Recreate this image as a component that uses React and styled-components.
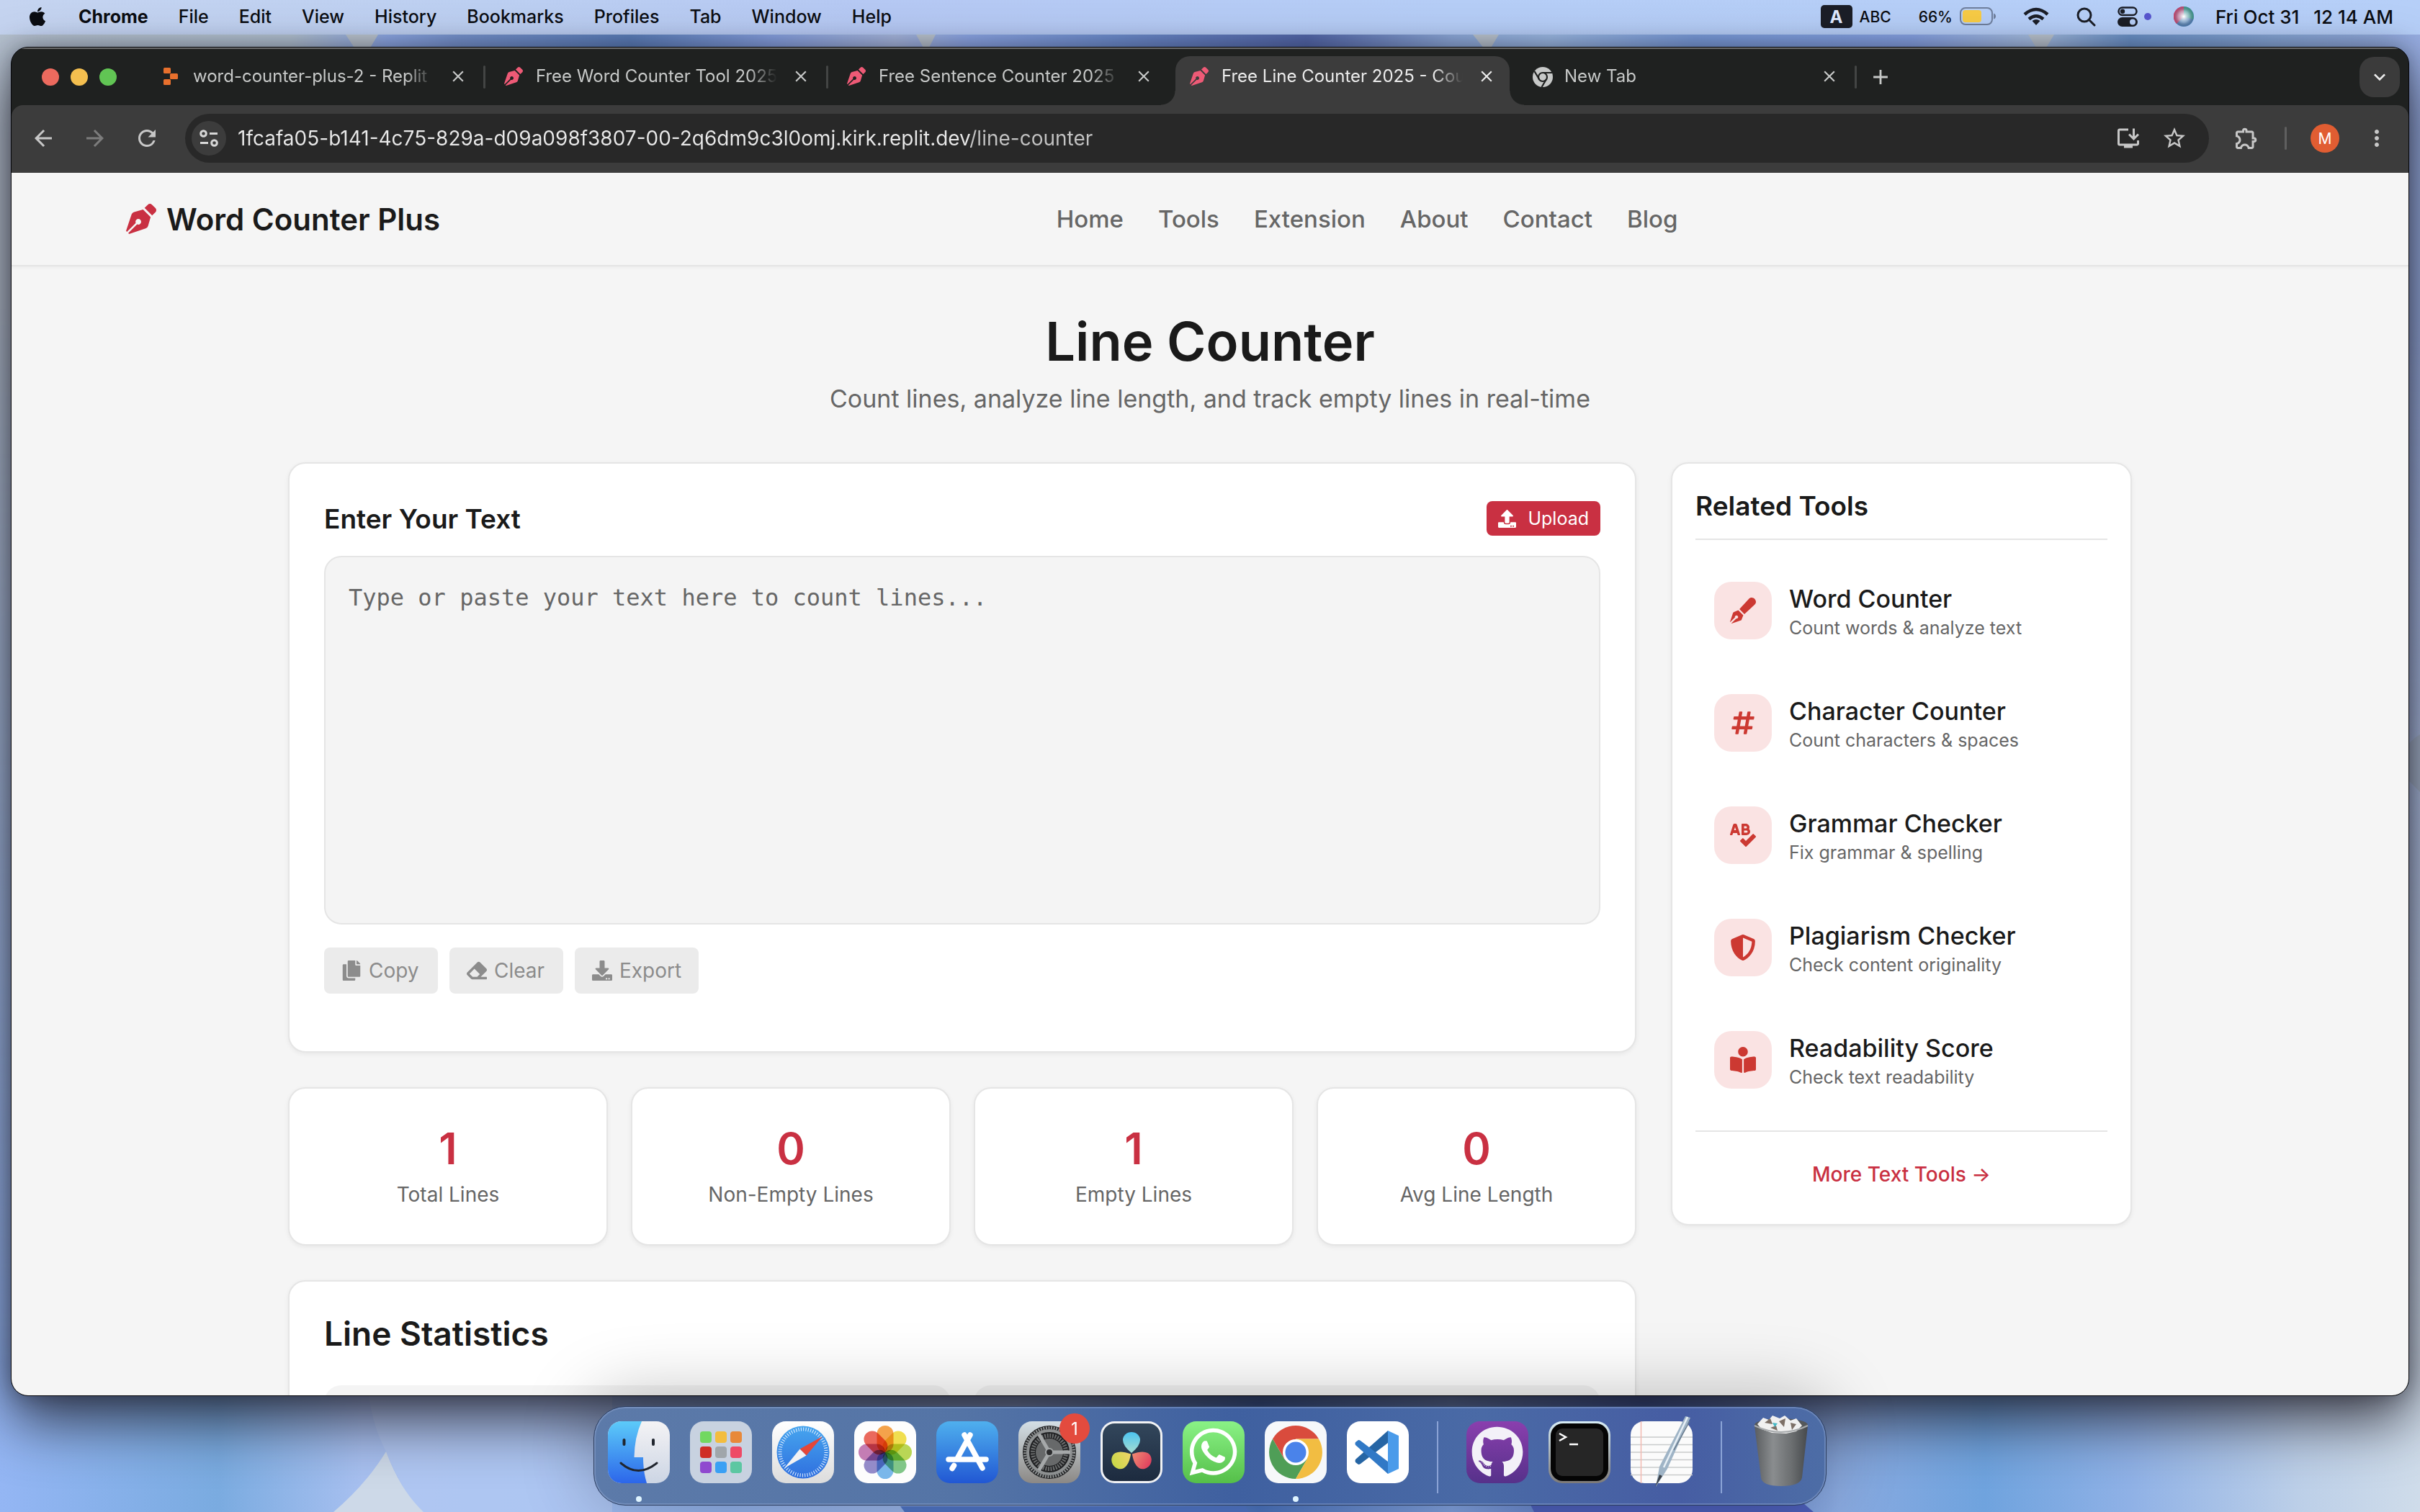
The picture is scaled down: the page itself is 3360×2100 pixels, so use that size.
import React from "react";
import styled, { createGlobalStyle, css } from "styled-components";
import {
  FaApple, FaPenNib, FaPenFancy, FaHashtag, FaSpellCheck, FaShieldAlt, FaBookReader,
  FaCopy, FaEraser, FaDownload, FaUpload, FaWhatsapp, FaGithub,
} from "react-icons/fa";
import {
  MdArrowBack, MdArrowForward, MdRefresh, MdStarBorder, MdOutlineExtension,
  MdOutlineInstallDesktop, MdMoreVert, MdClose, MdAdd, MdKeyboardArrowDown,
} from "react-icons/md";

const ui = `"Inter", "Liberation Sans", sans-serif`;
const red = "#c93042";
const ink = "#1a1a1a";
const muted = "#666666";
const line = "#e5e5e5";
const paper = "#f5f5f5";

const GlobalStyle = createGlobalStyle`
  *, *::before, *::after { box-sizing: border-box; }
  body { margin: 0; font-family: ${ui}; }
  button, input, textarea { font: inherit; }
  button { border: 0; padding: 0; background: none; color: inherit; }
  h1, h2, h3, p, ul { margin: 0; padding: 0; }
  ul { list-style: none; }
  a { color: inherit; text-decoration: none; }
`;

/* ---------- desktop ---------- */

const Desktop = styled.div`
  position: relative;
  height: 100vh;
  display: flex;
  flex-direction: column;
  overflow: hidden;
  background: #86aee6;
`;

const WallpaperSvg = styled.svg`
  position: absolute;
  inset: 0;
  width: 100%;
  height: 100%;
`;

const MenuBar = styled.header`
  position: relative;
  display: flex;
  align-items: center;
  justify-content: space-between;
  height: 48px;
  padding: 0 37px 2px 37px;
  background: linear-gradient(90deg, #c5d4f0 0%, #bccff1 20%, #b5c8f3 36%, #b5cdf6 60%, #b6cff8 100%);
  color: #0b0d12;
  font-size: 25px;
  font-weight: 500;
`;

const MenuGroup = styled.nav`
  display: flex;
  align-items: center;
  gap: 42px;
  svg { font-size: 30px; }
`;

const MenuItem = styled.button`
  font-weight: ${(p) => (p.$bold ? 700 : 500)};
`;

const StatusGroup = styled.div`
  display: flex;
  align-items: center;
  gap: ${(p) => (p.$tight ? 30 : 38)}px;
`;

const StatusPair = styled.span`
  display: flex;
  align-items: center;
  gap: 10px;
  font-size: 21px;
`;

const InputBadge = styled.span`
  display: grid;
  place-items: center;
  width: 44px;
  height: 32px;
  border-radius: 5px;
  background: #1b1e27;
  color: #dfe9ff;
  font-size: 24px;
  font-weight: 700;
`;

const Clock = styled.span`
  display: flex;
  gap: 20px;
  font-size: 26px;
`;

/* ---------- browser window ---------- */

const Window = styled.section`
  position: relative;
  flex: 1;
  min-height: 0;
  display: flex;
  flex-direction: column;
  margin: 17px 15px 161px;
  border: 1px solid #05060a;
  border-radius: 24px;
  overflow: hidden;
  background: #1f2120;
  box-shadow: 0 34px 80px rgba(20, 16, 24, 0.75), 0 0 30px rgba(20, 24, 40, 0.35);
`;

const TabStrip = styled.div`
  display: flex;
  align-items: center;
  height: 80px;
  padding: 0 12px 0 42px;
  border-top: 2px solid #6b6b6b;
`;

const Lights = styled.div`
  display: flex;
  gap: 16px;
  margin-right: 36px;
`;

const Light = styled.button`
  width: 24px;
  height: 24px;
  border-radius: 50%;
  background: ${(p) => p.$color};
`;

const Tab = styled.div`
  position: relative;
  flex: 0 1 476px;
  min-width: 0;
  display: flex;
  align-items: center;
  height: 78px;
  padding: 0 28px 3px 26px;
  color: ${(p) => (p.$active ? "#ececec" : "#c7c9c8")};
  font-size: 24px;
  isolation: isolate;

  ${(p) =>
    p.$active &&
    css`
      &::before {
        content: "";
        position: absolute;
        z-index: -1;
        inset: 10px 6px 0;
        border-radius: 20px 20px 0 0;
        background: #3c3c3c;
      }
      &::after {
        content: "";
        position: absolute;
        z-index: -1;
        left: -14px;
        right: -14px;
        bottom: 0;
        height: 20px;
        background:
          radial-gradient(circle at 0 0, transparent 19px, #3c3c3c 20px) left / 20px 20px no-repeat,
          radial-gradient(circle at 100% 0, transparent 19px, #3c3c3c 20px) right / 20px 20px no-repeat;
      }
    `}
`;

const TabIcon = styled.span`
  display: grid;
  place-items: center;
  width: 26px;
  height: 26px;
  margin-right: 18px;
  color: #ee5a76;
  font-size: 26px;
`;

const TabTitle = styled.span`
  flex: 1;
  min-width: 0;
  overflow: hidden;
  white-space: nowrap;
  mask-image: linear-gradient(90deg, #000 88%, transparent 100%);
`;

const TabClose = styled.button`
  display: grid;
  place-items: center;
  width: 26px;
  height: 26px;
  margin: 0 -3px 0 20px;
  font-size: 26px;
`;

const StripRule = styled.span`
  width: 3px;
  height: 32px;
  margin-left: -3px;
  border-radius: 2px;
  background: ${(p) => (p.$hidden ? "transparent" : "#434544")};
`;

const NewTab = styled.button`
  display: grid;
  place-items: center;
  width: 66px;
  height: 56px;
  color: #c7c9c8;
  font-size: 34px;
`;

const TabSearch = styled.button`
  display: grid;
  place-items: center;
  width: 56px;
  height: 56px;
  margin-left: auto;
  border-radius: 20px;
  background: #3b3b3b;
  color: #ececec;
  font-size: 32px;
`;

const Toolbar = styled.div`
  display: flex;
  align-items: center;
  height: 94px;
  padding: 12px 8px 14px;
  border-radius: 16px 16px 0 0;
  background: #3c3c3c;
  color: #c7c7c7;
`;

const ToolButton = styled.button`
  display: grid;
  place-items: center;
  width: ${(p) => p.$width || 72}px;
  height: 48px;
  color: ${(p) => (p.$dim ? "#7c7c7c" : "inherit")};
  font-size: 36px;
`;

const Omnibox = styled.form`
  flex: 1;
  display: flex;
  align-items: center;
  height: 68px;
  margin: 0 16px 0 17px;
  padding: 0 16px 0 9px;
  border-radius: 34px;
  background: #282828;
`;

const SiteInfo = styled.button`
  display: grid;
  place-items: center;
  width: 48px;
  height: 48px;
  margin-right: 16px;
  border-radius: 50%;
  background: #3c3c3c;
`;

const Address = styled.input`
  flex: 1;
  min-width: 0;
  height: 48px;
  padding: 0;
  border: 0;
  outline: 0;
  font-size: 28px;
  background: linear-gradient(90deg, #e9e9e9 1018px, #c3c3c3 1018px);
  background-clip: text;
  color: transparent;
`;

const ToolRule = styled.span`
  width: 3px;
  height: 32px;
  margin: 0 33px 0 17px;
  border-radius: 2px;
  background: #5f5f5f;
`;

const Avatar = styled.button`
  width: 40px;
  height: 40px;
  margin-right: 16px;
  border-radius: 50%;
  background: #e15d32;
  color: #ffffff;
  font-size: 21px;
`;

/* ---------- web page ---------- */

const Page = styled.div`
  flex: 1;
  min-height: 0;
  overflow: hidden;
  background: ${paper};
  color: ${ink};
`;

const SiteHeader = styled.header`
  display: flex;
  align-items: center;
  justify-content: space-between;
  height: 130px;
  padding: 0 159px;
  border-bottom: 2px solid ${line};
  box-shadow: 0 2px 4px rgba(0, 0, 0, 0.04);
  &::after { content: ""; }
`;

const Brand = styled.a`
  display: flex;
  align-items: center;
  gap: 14px;
  font-size: 42px;
  font-weight: 600;
  svg { color: ${red}; }
`;

const SiteNav = styled.nav`
  display: flex;
  gap: 48px;
  color: ${muted};
  font-size: 33px;
  font-weight: 500;
`;

const Intro = styled.div`
  padding: 60px 0;
  text-align: center;
`;

const Title = styled.h1`
  margin-bottom: 8px;
  font-size: 74px;
  font-weight: 600;
  line-height: 88px;
`;

const Subtitle = styled.p`
  color: ${muted};
  font-size: 34px;
  line-height: 56px;
`;

const Columns = styled.main`
  display: grid;
  grid-template-columns: minmax(0, 1fr) 640px;
  align-items: start;
  gap: 48px;
  max-width: 2560px;
  margin: 0 auto;
`;

const MainColumn = styled.div`
  display: grid;
  gap: 48px;
`;

const Card = styled.section`
  padding: ${(p) => p.$pad || "48px"};
  border: 2px solid ${line};
  border-radius: 24px;
  background: #ffffff;
  box-shadow: 0 2px 6px rgba(0, 0, 0, 0.06);
`;

const CardHead = styled.div`
  display: flex;
  align-items: center;
  justify-content: space-between;
  height: 56px;
  margin-bottom: 24px;
`;

const Label = styled.label`
  font-size: 37px;
  font-weight: 600;
`;

const UploadButton = styled.button`
  display: flex;
  align-items: center;
  gap: 16px;
  height: 48px;
  padding: 0 16px;
  border-radius: 8px;
  background: ${red};
  color: #ffffff;
  font-size: 25px;
`;

const TextBox = styled.textarea`
  display: block;
  width: 100%;
  height: 512px;
  padding: 32px;
  border: 2px solid ${line};
  border-radius: 24px;
  outline: 0;
  resize: none;
  background: #f4f4f4;
  color: ${ink};
  font-family: "DejaVu Sans Mono", monospace;
  font-size: 32px;
  line-height: 48px;
  &::placeholder { color: ${muted}; opacity: 1; }
`;

const Actions = styled.div`
  display: flex;
  gap: 16px;
  margin: 32px 0;
`;

const ActionButton = styled.button`
  display: flex;
  align-items: center;
  gap: 10px;
  height: 64px;
  min-width: 158px;
  padding: 0 24px;
  border-radius: 8px;
  background: #ebebeb;
  color: #8c8c8c;
  font-size: 28px;
`;

const Stats = styled.div`
  display: grid;
  grid-template-columns: repeat(4, 1fr);
  gap: 32px;
`;

const StatValue = styled.p`
  margin-bottom: 8px;
  color: ${red};
  font-size: 60px;
  font-weight: 600;
  line-height: 70px;
  text-align: center;
`;

const StatLabel = styled.p`
  color: ${muted};
  font-size: 28px;
  line-height: 42px;
  text-align: center;
`;

const SectionTitle = styled.h2`
  margin-bottom: 48px;
  font-size: 46px;
  font-weight: 600;
  line-height: 48px;
`;

const Panels = styled.div`
  display: grid;
  grid-template-columns: 1fr 1fr;
  gap: 32px;
`;

const Panel = styled.div`
  height: 180px;
  border-radius: 24px;
  background: #f4f4f4;
`;

const SideTitle = styled.h3`
  padding-bottom: 18px;
  border-bottom: 2px solid ${line};
  font-size: 37px;
  font-weight: 600;
  line-height: 54px;
`;

const ToolList = styled.ul`
  padding: 20px 0;
  border-bottom: 2px solid ${line};
`;

const ToolLink = styled.a`
  display: flex;
  align-items: center;
  gap: 24px;
  height: 156px;
  padding: 0 26px;
`;

const ToolIcon = styled.span`
  display: grid;
  place-items: center;
  width: 80px;
  height: 80px;
  border-radius: 24px;
  background: #fae3e3;
  color: #cc3932;
  font-size: 36px;
`;

const ToolText = styled.span`
  padding-top: 4px;
`;

const ToolName = styled.span`
  display: block;
  font-size: 34px;
  font-weight: 500;
  line-height: 44px;
`;

const ToolNote = styled.span`
  display: block;
  color: ${muted};
  font-size: 25px;
  line-height: 36px;
`;

const MoreLink = styled.a`
  display: block;
  padding: 38px 0 16px;
  color: ${red};
  font-size: 28px;
  font-weight: 500;
  line-height: 42px;
  text-align: center;
`;

/* ---------- dock ---------- */

const DockBar = styled.footer`
  position: absolute;
  bottom: 9px;
  left: 50%;
  translate: -50% 0;
  display: flex;
  align-items: flex-start;
  gap: 28px;
  height: 138px;
  padding: 20px 19px;
  border: 1px solid #2c3d5e;
  border-radius: 44px;
  background: linear-gradient(90deg, #5c7aa9 0%, #5474a6 30%, #3f60a0 52%, #4a6aa6 72%, #465da3 88%, #4d6da6 100%);
  box-shadow: inset 0 0 0 2px rgba(160, 180, 220, 0.35), 0 -10px 100px rgba(0, 0, 0, 0.28);
`;

const DockItem = styled.button`
  position: relative;
  width: 86px;
  height: 86px;
  svg { display: block; overflow: visible; }
`;

const DockRule = styled.span`
  width: 2px;
  height: 100px;
  margin: 0 11px;
  background: #8ba3d6;
`;

const Running = styled.span`
  position: absolute;
  left: 39px;
  bottom: -26px;
  width: 8px;
  height: 8px;
  border-radius: 50%;
  background: #dff4ff;
`;

const Badge = styled.span`
  position: absolute;
  top: -11px;
  right: -13px;
  display: grid;
  place-items: center;
  width: 42px;
  height: 42px;
  border-radius: 50%;
  background: #e34b3e;
  color: #ffffff;
  font-size: 24px;
`;

/* ---------- drawings ---------- */

const topStops = [
  [0, "#b6c2d0"], [12, "#b4c3d2"], [16, "#8ea9e6"], [19, "#7794cf"], [26, "#5c7fbb"], [32, "#88a2e2"],
  [37, "#a9b9e0"], [40, "#8ea8e8"], [46, "#6f8fd0"], [54, "#5468ab"], [60, "#8fabdc"], [64, "#9dbbe6"],
  [70, "#7b9ddc"], [79, "#88a4e6"], [84, "#a8c0e4"], [88, "#6c93c9"], [94, "#88a8d8"], [100, "#98aee2"],
];
const bottomStops = [
  [0, "#94b6f4"], [9, "#7aabe0"], [15, "#a8c0f0"], [22, "#a3c0f2"], [30, "#90b0e8"], [42, "#9db6e8"],
  [52, "#4a72bc"], [60, "#7f9fdc"], [68, "#4a66b4"], [76, "#8aaae0"], [82, "#6fa3de"], [88, "#8fb1e6"],
  [95, "#bccfe8"], [100, "#cfdcea"],
];

function Wallpaper() {
  return (
    <WallpaperSvg viewBox="0 0 3360 2100" preserveAspectRatio="none" aria-hidden="true">
      <defs>
        <linearGradient id="wpTop">{topStops.map(([o, c]) => <stop key={o} offset={`${o}%`} stopColor={c} />)}</linearGradient>
        <linearGradient id="wpBottom">{bottomStops.map(([o, c]) => <stop key={o} offset={`${o}%`} stopColor={c} />)}</linearGradient>
        <linearGradient id="wpFade" x2="0" y2="1">
          <stop offset="0.2" stopColor="#fff" stopOpacity="0" />
          <stop offset="0.9" stopColor="#fff" />
        </linearGradient>
        <mask id="wpMask"><rect width="3360" height="2100" fill="url(#wpFade)" /></mask>
      </defs>
      <rect width="3360" height="2100" fill="url(#wpTop)" />
      <rect width="3360" height="2100" fill="url(#wpBottom)" mask="url(#wpMask)" />
      <g fill="#bcc6d0">
        <path d="M480 48h45l-12 20h-20z" />
        <path d="M1272 48h27l-10 20h-6z" />
        <path d="M2045 48h36l-12 20h-8z" />
        <path d="M2816 48h36l-12 20h-12z" />
      </g>
      <path d="M3360 1020q-34 20-20 60l20 20z" fill="#a9b9cf" />
      <path d="M512 1938q6 44 24 78 26 62 50 84H850V1938z" fill="#b6cbf3" opacity="0.55" />
      <path d="M536 2016q-28 46-73 84h125q-32-30-52-84z" fill="#cdd9e8" />
      <path d="M1250 2092h480l4 8h-478z" fill="#4f74c4" />
      <path d="M2124 2088h380l14 12h-388z" fill="#4c5eb8" />
    </WallpaperSvg>
  );
}

const Battery = () => (
  <svg width="50" height="26" viewBox="0 0 50 26" aria-hidden="true">
    <rect x="1" y="1" width="44" height="23" rx="7" fill="none" stroke="#6f7f9d" strokeWidth="2" />
    <rect x="4" y="4" width="26" height="17" rx="4" fill="#f7cb45" />
    <path d="M47 8.500q3 1 3 4t-3 4z" fill="#6f7f9d" />
  </svg>
);

const Wifi = () => (
  <svg width="36" height="26" viewBox="0 0 36 26" fill="none" stroke="#1b1e27" strokeWidth="4.500" aria-hidden="true">
    <path d="M2 10Q18 -4 34 10" />
    <path d="M8 16.500Q18 8 28 16.500" />
    <path d="M18 25l-5.500-6q5.500-4 11 0z" fill="#1b1e27" stroke="none" />
  </svg>
);

const Lens = () => (
  <svg width="27" height="27" viewBox="0 0 27 27" fill="none" stroke="#1b1e27" strokeWidth="3" strokeLinecap="round" aria-hidden="true">
    <circle cx="11" cy="11" r="9" />
    <path d="M17.500 17.500l7.500 7.500" />
  </svg>
);

const ControlCenter = () => (
  <svg width="48" height="28" viewBox="0 0 48 28" aria-hidden="true">
    <rect x="1.500" y="1.500" width="25" height="10.500" rx="5.200" fill="none" stroke="#1b1e27" strokeWidth="2.500" />
    <circle cx="7" cy="6.800" r="3.200" fill="#1b1e27" />
    <rect x="0" y="15" width="28" height="13" rx="6.500" fill="#1b1e27" />
    <circle cx="21" cy="21.500" r="4" fill="#b5cdf6" />
    <circle cx="42" cy="14" r="5" fill="#5856cf" />
  </svg>
);

const Siri = () => (
  <svg width="28" height="28" viewBox="0 0 28 28" aria-hidden="true">
    <defs>
      <radialGradient id="siriGlow">
        <stop offset="0.05" stopColor="#fff" />
        <stop offset="0.6" stopColor="#cfe0f4" stopOpacity="0.5" />
        <stop offset="1" stopColor="#55607c" stopOpacity="0.2" />
      </radialGradient>
    </defs>
    <circle cx="14" cy="14" r="14" fill="#4d7cae" />
    <path d="M14 0A14 14 0 0 0 4 24L14 14z" fill="#c8466c" />
    <path d="M14 0A14 14 0 0 1 27 18L14 14z" fill="#3f9c87" />
    <circle cx="14" cy="14" r="13" fill="url(#siriGlow)" />
  </svg>
);

const ReplitMark = () => (
  <svg width="20" height="24" viewBox="0 0 20 24" fill="#e8702d" aria-hidden="true">
    <rect width="10" height="8" rx="1.500" />
    <rect x="9" y="8" width="11" height="8" rx="1.500" />
    <rect y="16" width="10" height="8" rx="1.500" />
  </svg>
);

const ChromeMark = () => (
  <svg width="28" height="28" viewBox="0 0 28 28" aria-hidden="true">
    <circle cx="14" cy="14" r="14" fill="#c7c9c8" />
    <g stroke="#1f2120" strokeWidth="2.200">
      <circle cx="14" cy="14" r="6" fill="#c7c9c8" />
      <path d="M14 8h13M9 17L2.500 6M19 17l-6.500 11" />
    </g>
  </svg>
);

const Sliders = () => (
  <svg width="26" height="24" viewBox="0 0 26 24" fill="none" stroke="#d8d8d8" strokeWidth="3" aria-hidden="true">
    <circle cx="5.500" cy="5.500" r="3.800" />
    <path d="M14 5.500h11M1 18.500h11" />
    <circle cx="20.500" cy="18.500" r="3.800" />
  </svg>
);

const Art = ({ children }) => (
  <svg width="86" height="86" viewBox="0 0 86 86" aria-hidden="true">{children}</svg>
);

const Grad = ({ id, from, to }) => (
  <linearGradient id={id} x2="0" y2="1">
    <stop stopColor={from} />
    <stop offset="1" stopColor={to} />
  </linearGradient>
);

const Finder = () => (
  <Art>
    <defs>
      <Grad id="fBlue" from="#5ccbf9" to="#2c66ea" />
      <Grad id="fPale" from="#f4f3f5" to="#ccd5e4" />
      <clipPath id="fClip"><rect width="86" height="86" rx="19" /></clipPath>
    </defs>
    <g clipPath="url(#fClip)">
      <rect width="86" height="86" fill="url(#fPale)" />
      <path d="M0 0H47Q37 22 36.500 50H49Q49 70 54 86H0z" fill="url(#fBlue)" />
    </g>
    <g fill="none" stroke="#20252e" strokeLinecap="round">
      <path d="M22.500 26v6M63 26v6" strokeWidth="4" />
      <path d="M18 58Q42 79 68 58" strokeWidth="3" />
    </g>
  </Art>
);

const padColors = ["#72d860", "#f3bd3e", "#e8893a", "#cf2e26", "#a0a6aa", "#ee4a66", "#8f49cf", "#3aa0f4", "#5cc7a2"];
const Launchpad = () => (
  <Art>
    <rect width="86" height="86" rx="19" fill="#c8d2e0" />
    {padColors.map((c, i) => (
      <rect key={c} x={14 + (i % 3) * 21} y={14 + Math.floor(i / 3) * 21} width="16" height="16" rx="4" fill={c} />
    ))}
  </Art>
);

const Safari = () => (
  <Art>
    <defs>
      <Grad id="sfBg" from="#ffffff" to="#dcdcdc" />
      <Grad id="sfDial" from="#46a5ee" to="#2f6fdf" />
    </defs>
    <rect width="86" height="86" rx="19" fill="url(#sfBg)" />
    <circle cx="43" cy="43" r="36.500" fill="url(#sfDial)" />
    <circle cx="43" cy="43" r="32" fill="none" stroke="#e6f2ff" strokeWidth="5" strokeDasharray="1 2.350" />
    <path d="M70 21L38.500 38.500 47.500 47.500z" fill="#e44638" />
    <path d="M17 65L38.500 38.500 47.500 47.500z" fill="#f2f2f4" />
  </Art>
);

const petals = ["#f59a37", "#f1dd3c", "#b4d442", "#74c27c", "#6cb1ea", "#8a80c6", "#c070ae", "#ea5a4c"];
const Petal = styled.rect`
  mix-blend-mode: multiply;
`;
const Photos = () => (
  <Art>
    <rect width="86" height="86" rx="19" fill="#fdfdfd" />
    {petals.map((c, i) => (
      <Petal key={c} x="31.500" y="6" width="23" height="37" rx="11.500" fill={c} opacity="0.9"
        transform={`rotate(${i * 45} 43 43)`} />
    ))}
  </Art>
);

const AppStore = () => (
  <Art>
    <defs><Grad id="asBg" from="#4fb0ee" to="#2157d3" /></defs>
    <rect width="86" height="86" rx="19" fill="url(#asBg)" />
    <g stroke="#fff" strokeWidth="7.500" strokeLinecap="round">
      <path d="M47 19L30 50M24.500 61.500L22 65.500M39 19L64 65M17 53H69" />
    </g>
  </Art>
);

const Settings = () => (
  <Art>
    <defs><Grad id="stBg" from="#d4dfe6" to="#8b8885" /></defs>
    <rect width="86" height="86" rx="19" fill="url(#stBg)" />
    <circle cx="43" cy="43" r="37" fill="#1f2022" />
    <circle cx="43" cy="43" r="34" fill="none" stroke="#8d9091" strokeWidth="4" strokeDasharray="2 1.600" />
    <circle cx="43" cy="43" r="30" fill="none" stroke="#8d9091" strokeWidth="4" />
    <circle cx="43" cy="43" r="23" fill="none" stroke="#6a6c6d" strokeWidth="6" strokeDasharray="2 1.600" />
    <circle cx="43" cy="43" r="19" fill="#67696a" />
    <path d="M43 43H72M43 43L28.500 18M43 43L28.500 68" stroke="#a5a8a9" strokeWidth="5" />
    <circle cx="43" cy="43" r="5" fill="#2b2c2e" stroke="#a5a8a9" strokeWidth="2" />
  </Art>
);

const Resolve = () => (
  <Art>
    <defs>
      <Grad id="rvBg" from="#33475c" to="#1c2a3e" />
      <Grad id="rvA" from="#4cc4f0" to="#a6dcd0" />
      <Grad id="rvB" from="#c8d848" to="#f0d468" />
      <Grad id="rvC" from="#e0405e" to="#ef8a72" />
    </defs>
    <rect x="1.500" y="1.500" width="83" height="83" rx="18" fill="url(#rvBg)" stroke="#f1f2f4" strokeWidth="3" />
    <path d="M43 44Q31 34 31 26a12 11 0 0 1 24 0Q55 34 43 44z" fill="url(#rvA)" />
    <path d="M43 44Q31 34 31 26a12 11 0 0 1 24 0Q55 34 43 44z" fill="url(#rvC)" transform="rotate(120 43 45)" />
    <path d="M43 44Q31 34 31 26a12 11 0 0 1 24 0Q55 34 43 44z" fill="url(#rvB)" transform="rotate(240 43 45)" />
  </Art>
);

const WhatsApp = () => (
  <Art>
    <defs><Grad id="waBg" from="#8af286" to="#55bf49" /></defs>
    <rect width="86" height="86" rx="19" fill="url(#waBg)" />
    <FaWhatsapp x="5" y="5" size={75} color="#fff" />
  </Art>
);

const Chrome = () => (
  <Art>
    <rect width="86" height="86" rx="19" fill="#f6f8fa" />
    <path d="M11 24.500A37 37 0 0 1 75 24.500H43L27 52.250z" fill="#d94b3d" />
    <path d="M11 24.500A37 37 0 0 0 43 80L59 52.250H27z" fill="#4f9e57" />
    <path d="M43 80A37 37 0 0 0 75 24.500H43L59 52.250z" fill="#f2bd42" />
    <circle cx="43" cy="43" r="18" fill="#fff" />
    <circle cx="43" cy="43" r="14.500" fill="#4a83ea" />
  </Art>
);

const VsCode = () => (
  <Art>
    <rect width="86" height="86" rx="19" fill="#fff" />
    <path d="M57 13L12 53q-1 2 0 4l4 3q2 0 3-1L57 30z" fill="#2665a4" />
    <path d="M57 73L12 33q-1-2 0-4l4-3q2 0 3 1L57 56z" fill="#3179c6" />
    <path d="M57 13L72 20V66L57 73z" fill="#4a9bea" />
  </Art>
);

const GitHub = () => (
  <Art>
    <defs><Grad id="ghBg" from="#8a3fae" to="#56318a" /></defs>
    <rect width="86" height="86" rx="19" fill="url(#ghBg)" />
    <FaGithub x="6.500" y="6.500" size={73} color="#f3f1f8" />
  </Art>
);

const Terminal = () => (
  <Art>
    <defs><Grad id="tmRim" from="#d7ecf5" to="#7d7a78" /></defs>
    <rect width="86" height="86" rx="19" fill="url(#tmRim)" />
    <rect x="3" y="3" width="80" height="80" rx="17" fill="#050505" />
    <rect x="10" y="10" width="66" height="66" rx="9" fill="#262626" />
    <path d="M15 17l9 5-9 5M29 32H41" fill="none" stroke="#fff" strokeWidth="2.500" />
  </Art>
);

const TextEdit = () => (
  <Art>
    <rect width="86" height="86" rx="19" fill="#fbfbfb" />
    <path d="M0 22H86M0 32.500H86M0 43H86M0 53.500H86M0 64H86M0 74.500H86" stroke="#c9cbcc" strokeWidth="1.500" />
    <path d="M14.500 0V86" stroke="#f3b9b0" strokeWidth="1.500" />
    <path d="M76-7l7 2L51 66l-16 25 5-28z" fill="#9fb4c6" />
    <path d="M79-6L46 64" stroke="#e8f0f6" strokeWidth="2.500" />
    <path d="M82 0L60 40" stroke="#66788a" strokeWidth="1.500" />
    <path d="M40 74l-6 17 10-15z" fill="#3b4149" />
  </Art>
);

const Trash = () => (
  <Art>
    <defs>
      <linearGradient id="trBody">
        <stop stopColor="#5a5d60" />
        <stop offset="0.35" stopColor="#8a8d8f" />
        <stop offset="0.7" stopColor="#6b6e70" />
        <stop offset="1" stopColor="#46494c" />
      </linearGradient>
    </defs>
    <path d="M6 6Q43 22 80 6L72 78Q70 90 43 90T15 78z" fill="url(#trBody)" />
    <ellipse cx="43" cy="5" rx="37" ry="9" fill="#55585b" />
    <path d="M10 4l8-9 8 3 5-6 10 4 7-4 8 7 8-3 8 10-8 8-14 3-20-1-14-5z" fill="#f0f0f0" />
    <path d="M20 2l8-6 3 8zM40 0l9-4-2 12zM56 2l8 2-6 8zM28 9l8-3 2 7z" fill="#7c6f66" />
    <path d="M31 2l7 1-4 5z" fill="#45b7c4" />
    <path d="M6 6Q43 24 80 6" fill="none" stroke="#a8abad" strokeWidth="2" />
  </Art>
);

/* ---------- data ---------- */

const menus = ["Chrome", "File", "Edit", "View", "History", "Bookmarks", "Profiles", "Tab", "Window", "Help"];

const tabs = [
  { title: "word-counter-plus-2 - Replit", icon: <ReplitMark />, rule: true },
  { title: "Free Word Counter Tool 2025", icon: <FaPenNib />, rule: true },
  { title: "Free Sentence Counter 2025 -", icon: <FaPenNib /> },
  { title: "Free Line Counter 2025 - Count", icon: <FaPenNib />, active: true },
  { title: "New Tab", icon: <ChromeMark />, rule: true },
];

const navLinks = ["Home", "Tools", "Extension", "About", "Contact", "Blog"];

const stats = [["1", "Total Lines"], ["0", "Non-Empty Lines"], ["1", "Empty Lines"], ["0", "Avg Line Length"]];

const related = [
  { name: "Word Counter", note: "Count words & analyze text", Icon: FaPenFancy },
  { name: "Character Counter", note: "Count characters & spaces", Icon: FaHashtag },
  { name: "Grammar Checker", note: "Fix grammar & spelling", Icon: FaSpellCheck },
  { name: "Plagiarism Checker", note: "Check content originality", Icon: FaShieldAlt },
  { name: "Readability Score", note: "Check text readability", Icon: FaBookReader },
];

const dockApps = [
  { name: "Finder", Icon: Finder, running: true },
  { name: "Launchpad", Icon: Launchpad },
  { name: "Safari", Icon: Safari },
  { name: "Photos", Icon: Photos },
  { name: "App Store", Icon: AppStore },
  { name: "System Settings", Icon: Settings, badge: "1" },
  { name: "DaVinci Resolve", Icon: Resolve },
  { name: "WhatsApp", Icon: WhatsApp },
  { name: "Google Chrome", Icon: Chrome, running: true },
  { name: "Visual Studio Code", Icon: VsCode },
  null,
  { name: "GitHub Desktop", Icon: GitHub },
  { name: "Terminal", Icon: Terminal },
  { name: "TextEdit", Icon: TextEdit },
  null,
  { name: "Trash", Icon: Trash },
];

/* ---------- sections ---------- */

function SystemBar() {
  return (
    <MenuBar>
      <MenuGroup aria-label="Menu bar">
        <FaApple aria-hidden="true" />
        {menus.map((m, i) => <MenuItem key={m} $bold={i === 0}>{m}</MenuItem>)}
      </MenuGroup>
      <StatusGroup>
        <StatusPair><InputBadge>A</InputBadge>ABC</StatusPair>
        <StatusPair>66%<Battery /></StatusPair>
        <Wifi />
        <StatusGroup $tight>
          <Lens />
          <ControlCenter />
          <Siri />
          <Clock><span>Fri Oct 31</span><span>12 14 AM</span></Clock>
        </StatusGroup>
      </StatusGroup>
    </MenuBar>
  );
}

function BrowserChrome() {
  return (
    <>
      <TabStrip>
        <Lights>
          <Light $color="#ec6a5e" aria-label="Close window" />
          <Light $color="#f4bf4f" aria-label="Minimize window" />
          <Light $color="#61c554" aria-label="Zoom window" />
        </Lights>
        {tabs.map((t) => (
          <React.Fragment key={t.title}>
            <Tab $active={t.active}>
              <TabIcon>{t.icon}</TabIcon>
              <TabTitle>{t.title}</TabTitle>
              <TabClose aria-label="Close tab"><MdClose /></TabClose>
            </Tab>
            <StripRule $hidden={!t.rule} />
          </React.Fragment>
        ))}
        <NewTab aria-label="New tab"><MdAdd /></NewTab>
        <TabSearch aria-label="Search tabs"><MdKeyboardArrowDown /></TabSearch>
      </TabStrip>
      <Toolbar>
        <ToolButton aria-label="Back"><MdArrowBack /></ToolButton>
        <ToolButton aria-label="Forward" $dim><MdArrowForward /></ToolButton>
        <ToolButton aria-label="Reload"><MdRefresh /></ToolButton>
        <Omnibox>
          <SiteInfo type="button" aria-label="Site information"><Sliders /></SiteInfo>
          <Address
            type="text"
            aria-label="Address"
            defaultValue="1fcafa05-b141-4c75-829a-d09a098f3807-00-2q6dm9c3l0omj.kirk.replit.dev/line-counter"
          />
          <ToolButton type="button" $width={64} aria-label="Install app"><MdOutlineInstallDesktop /></ToolButton>
          <ToolButton type="button" $width={64} aria-label="Bookmark"><MdStarBorder /></ToolButton>
        </Omnibox>
        <ToolButton aria-label="Extensions"><MdOutlineExtension /></ToolButton>
        <ToolRule />
        <Avatar aria-label="Profile">M</Avatar>
        <ToolButton aria-label="More"><MdMoreVert /></ToolButton>
      </Toolbar>
    </>
  );
}

function Site() {
  return (
    <Page>
      <SiteHeader>
        <Brand href="#"><FaPenNib />Word Counter Plus</Brand>
        <SiteNav>{navLinks.map((n) => <a key={n} href="#">{n}</a>)}</SiteNav>
      </SiteHeader>
      <Intro>
        <Title>Line Counter</Title>
        <Subtitle>Count lines, analyze line length, and track empty lines in real-time</Subtitle>
      </Intro>
      <Columns>
        <MainColumn>
          <Card>
            <CardHead>
              <Label htmlFor="source">Enter Your Text</Label>
              <UploadButton><FaUpload />Upload</UploadButton>
            </CardHead>
            <TextBox id="source" placeholder="Type or paste your text here to count lines..." />
            <Actions>
              <ActionButton><FaCopy />Copy</ActionButton>
              <ActionButton><FaEraser />Clear</ActionButton>
              <ActionButton><FaDownload />Export</ActionButton>
            </Actions>
          </Card>
          <Stats>
            {stats.map(([value, label]) => (
              <Card key={label}>
                <StatValue>{value}</StatValue>
                <StatLabel>{label}</StatLabel>
              </Card>
            ))}
          </Stats>
          <Card>
            <SectionTitle>Line Statistics</SectionTitle>
            <Panels><Panel /><Panel /></Panels>
          </Card>
        </MainColumn>
        <Card as="aside" $pad="32px">
          <SideTitle>Related Tools</SideTitle>
          <ToolList>
            {related.map(({ name, note, Icon }) => (
              <li key={name}>
                <ToolLink href="#">
                  <ToolIcon><Icon /></ToolIcon>
                  <ToolText>
                    <ToolName>{name}</ToolName>
                    <ToolNote>{note}</ToolNote>
                  </ToolText>
                </ToolLink>
              </li>
            ))}
          </ToolList>
          <MoreLink href="#">More Text Tools →</MoreLink>
        </Card>
      </Columns>
    </Page>
  );
}

function Dock() {
  return (
    <DockBar>
      {dockApps.map((app, i) =>
        app ? (
          <DockItem key={app.name} aria-label={app.name}>
            <app.Icon />
            {app.badge && <Badge>{app.badge}</Badge>}
            {app.running && <Running />}
          </DockItem>
        ) : (
          <DockRule key={i} />
        )
      )}
    </DockBar>
  );
}

export default function App() {
  return (
    <>
      <GlobalStyle />
      <Desktop>
        <Wallpaper />
        <SystemBar />
        <Window>
          <BrowserChrome />
          <Site />
        </Window>
        <Dock />
      </Desktop>
    </>
  );
}
